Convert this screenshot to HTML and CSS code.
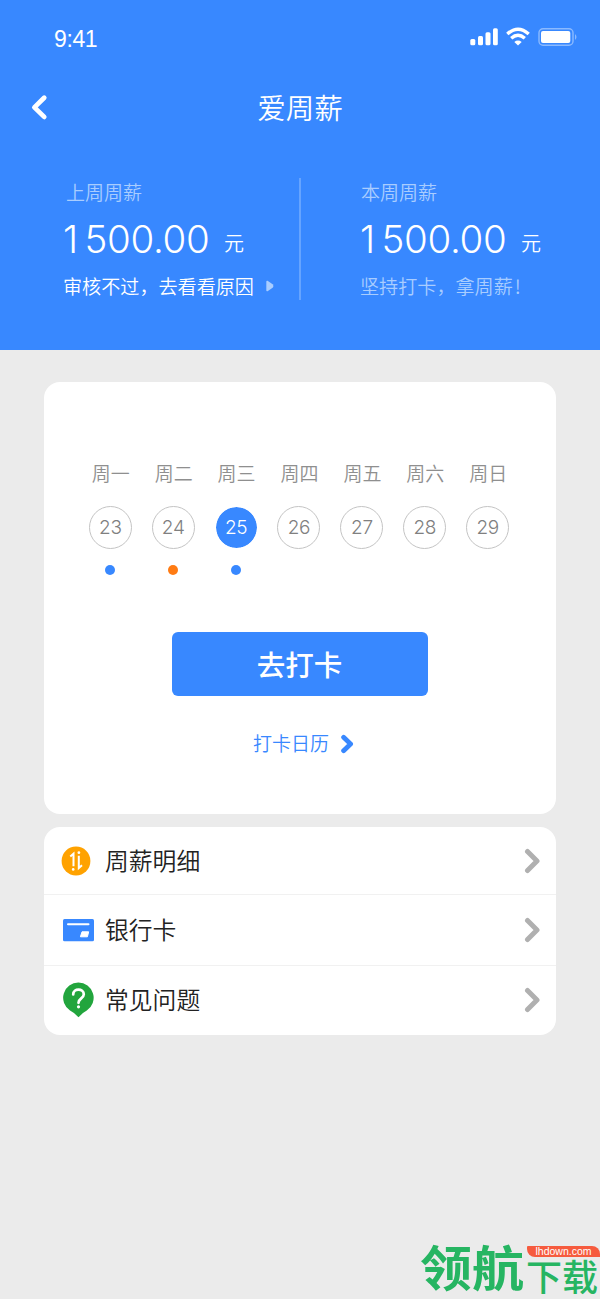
FILE: index.html
```html
<!DOCTYPE html>
<html lang="zh-CN">
<head>
<meta charset="utf-8">
<title>爱周薪</title>
<link rel="stylesheet" href="styles.css">
</head>
<body>
<div class="page">
  <header class="hero">
    <div class="status">
      <span class="clock">9:41</span>
      <svg class="status-icons" width="108" height="20" viewBox="0 0 108 20">
        <g fill="#fff">
          <rect x="0.3" y="12" width="5" height="6.2" rx="1.5"/>
          <rect x="8" y="9" width="5" height="9.2" rx="1.5"/>
          <rect x="15.5" y="5.2" width="5" height="13" rx="1.5"/>
          <rect x="23" y="1.2" width="4.8" height="17" rx="1.5"/>
          <path d="M48 18.5 L44.3 14.9 Q48 12 51.7 14.9 Z"/>
          <rect x="71" y="4" width="29.3" height="12" rx="2"/>
        </g>
        <path d="M37.3 7 Q48 -2.6 58.7 7 M41.2 11.3 Q48 5.3 54.8 11.3" fill="none" stroke="#fff" stroke-width="3.4"/>
        <rect x="69" y="1.7" width="34" height="16.6" rx="4" fill="none" stroke="#fff" stroke-opacity=".42" stroke-width="1.4"/>
        <path d="M105 7v6q3-3 0-6z" fill="#fff" fill-opacity=".42"/>
      </svg>
    </div>
    <div class="nav">
      <svg class="back" width="20" height="28" viewBox="0 0 20 28"><path d="M15.2 4.7 5.4 14.4l9.8 9.5" fill="none" stroke="#fff" stroke-width="4.8" stroke-linecap="round" stroke-linejoin="round"/></svg>
      <h1 class="title">爱周薪</h1>
    </div>
    <div class="stats">
      <section class="stat">
        <p class="label">上周周薪</p>
        <p class="amount"><span class="num"><span class="lead">1</span>500.00</span><span class="unit">元</span></p>
        <p class="hint strong">审核不过，去看看原因<svg class="play" width="8" height="12" viewBox="0 0 8 12"><path d="M.3 1.8Q.3.3 1.6.8L6.6 4.2Q8.2 6 6.6 7.8L1.6 11.2Q.3 11.7.3 10.2z" fill="#a9cdff"/></svg></p>
      </section>
      <section class="stat right">
        <p class="label">本周周薪</p>
        <p class="amount"><span class="num"><span class="lead">1</span>500.00</span><span class="unit">元</span></p>
        <p class="hint">坚持打卡，拿周薪<span class="bang">!</span></p>
      </section>
    </div>
  </header>
  <main class="content">
    <section class="card">
      <div class="week">
        <div class="day"><span class="name">周一</span><span class="date">23</span><i class="dot"></i></div>
        <div class="day"><span class="name">周二</span><span class="date">24</span><i class="dot orange"></i></div>
        <div class="day"><span class="name">周三</span><span class="date active">25</span><i class="dot"></i></div>
        <div class="day"><span class="name">周四</span><span class="date">26</span></div>
        <div class="day"><span class="name">周五</span><span class="date">27</span></div>
        <div class="day"><span class="name">周六</span><span class="date">28</span></div>
        <div class="day"><span class="name">周日</span><span class="date">29</span></div>
      </div>
      <button class="punch">去打卡</button>
      <a class="calendar">打卡日历<svg width="14" height="20" viewBox="0 0 14 20"><path d="M3.6 3.3 10.6 10l-7 6.7" fill="none" stroke="#3888ff" stroke-width="4.8" stroke-linecap="round" stroke-linejoin="round"/></svg></a>
    </section>
    <nav class="menu">
      <a class="item">
        <svg class="icon" width="36" height="36" viewBox="0 0 36 36"><circle cx="16" cy="18" r="14.4" fill="#ffa200"/><g fill="none" stroke="#fff" stroke-width="2"><path d="M10.3 13.6 13.5 10.8V23.3M18.8 12.8V25l3.2-2.8"/></g><g fill="#fff"><circle cx="13.2" cy="26.4" r="1.3"/><circle cx="18.9" cy="9.7" r="1.4"/></g></svg>
        <span class="text">周薪明细</span>
        <svg class="chev" width="18" height="28" viewBox="0 0 18 28"><path d="M3.5 4.5 13 14l-9.5 9.5"/></svg>
      </a>
      <a class="item">
        <svg class="icon" width="36" height="36" viewBox="0 0 36 36"><rect x="3" y="7" width="31" height="22.3" rx="1.5" fill="#3888ff"/><path d="M8 12.2h20.5" stroke="#fff" stroke-width="2" stroke-linecap="round"/><path d="M22 19.8h6.7l-1.3 5h-7z" fill="#fff" stroke="#fff" stroke-linejoin="round"/></svg>
        <span class="text">银行卡</span>
        <svg class="chev" width="18" height="28" viewBox="0 0 18 28"><path d="M3.5 4.5 13 14l-9.5 9.5"/></svg>
      </a>
      <a class="item">
        <svg class="icon" width="36" height="36" viewBox="0 0 36 36"><path d="M18.4.6a15.2 15.2 0 0 1 8.4 27.9Q22 31 18.5 35.2 15 31 10 28.5A15.2 15.2 0 0 1 18.4.6z" fill="#22a53d"/><path d="M13.2 12.4c0-6.5 10.6-6.3 10.6-.2 0 4.3-5.3 4-5.3 8.6" fill="none" stroke="#fff" stroke-width="2.7" stroke-linecap="round"/><circle cx="18.5" cy="24.8" r="1.6" fill="#fff"/></svg>
        <span class="text">常见问题</span>
        <svg class="chev" width="18" height="28" viewBox="0 0 18 28"><path d="M3.5 4.5 13 14l-9.5 9.5"/></svg>
      </a>
    </nav>
  </main>
  <div class="watermark">
    <span class="wm-big">领航</span>
    <div class="wm-side"><span class="wm-url">lhdown.com</span><span class="wm-small">下载</span></div>
  </div>
</div>
</body>
</html>
```
FILE: styles.css
```css
* { box-sizing: border-box; }
body { margin: 0; font-family: "Noto Sans CJK SC", sans-serif; font-weight: 350; }
p, h1 { margin: 0; }
svg { display: block; flex: none; }

.page { position: relative; width: 600px; height: 1299px; background: #ebebeb; overflow: hidden; }

.hero { height: 350px; background: #3888ff; color: #fff; }
.status { height: 76px; padding: 0 22px 0 54px; display: flex; justify-content: space-between; }
.clock { padding-top: 24px; font: 400 23px/30px "Liberation Sans", sans-serif; letter-spacing: -.4px; }
.status-icons { margin-top: 27px; }
.nav { height: 60px; padding: 0 29px; display: grid; grid-template-columns: 20px 1fr 20px; align-items: center; }
.title { font-size: 28.5px; font-weight: 350; line-height: 62px; text-align: center; }

.stats { display: flex; padding-top: 42px; }
.stat { width: 300px; height: 122px; padding-left: 63px; }
.stat + .stat { border-left: 2px solid #66a4ff; margin-left: -1px; padding-left: 60px; width: 301px; }
.label { padding-left: 3px; font-size: 19px; line-height: 28px; color: #a9cdff; }
.right .label { padding-left: 0; }
.amount { display: flex; height: 67px; }
.num { width: 161px; font: 300 38.5px/67px Inter, sans-serif; letter-spacing: -.3px; }
.lead { display: inline-block; width: 21.5px; }
.right .num { margin-left: -1px; }
.unit { font-size: 20px; line-height: 73px; }
.hint { display: flex; align-items: center; font-size: 19.1px; line-height: 26px; color: #a9cdff; white-space: nowrap; }
.right .hint { margin-left: -1px; }
.strong { color: #fff; }
.play { margin-left: 12px; }
.bang { margin-left: 2px; }

.content { padding: 32px 44px 0; display: flex; flex-direction: column; gap: 13px; }
.card { height: 431.5px; padding-top: 76px; border-radius: 16px; background: #fff; display: flex; flex-direction: column; align-items: center; }
.week { display: grid; grid-template-columns: repeat(7, 62.9px); height: 174px; margin-left: -2px; }
.day { display: flex; flex-direction: column; align-items: center; }
.name { padding-left: 1px; font-size: 19px; line-height: 30px; color: #8f8f8f; }
.date { width: 43px; height: 43px; margin: 18px 0 15.5px; border: 1.5px solid #c4c4c4; border-radius: 50%; font: 300 19px/41px Inter, sans-serif; letter-spacing: -.3px; text-align: center; color: #808080; }
.active { border-color: #fff; background: #3888ff; background-clip: padding-box; color: #fff; }
.dot { width: 10px; height: 10px; border-radius: 50%; background: #3888ff; }
.orange { background: #ff7b13; }
.punch { width: 256px; height: 64px; margin-left: -1px; padding: 0; border: 0; border-radius: 6px; background: #3888ff; color: #fff; font: 500 28.5px/64px "Noto Sans CJK SC", sans-serif; }
.calendar { display: flex; align-items: center; gap: 11px; margin: 32px 0 0 7px; font-size: 19px; line-height: 30px; color: #3888ff; }
.calendar svg { margin-top: 1px; }

.menu { height: 208.5px; border-radius: 16px; background: #fff; display: grid; grid-template-rows: 67.5px 70.5px 70.5px; }
.item { display: flex; align-items: center; padding: 0 14px 0 16px; }
.item:first-child { padding-top: 2px; }
.item + .item { border-top: 1px solid #f1f1f1; }
.text { flex: 1; padding: 0 0 2px 9px; font-size: 23.8px; line-height: 38px; color: #222; }
.item:last-child { padding-bottom: 1px; }
.chev path { fill: none; stroke: #b0b0b0; stroke-width: 5; stroke-linecap: round; stroke-linejoin: round; }

.watermark { position: absolute; left: 420px; top: 1243px; display: flex; color: #26b562; font-weight: 700; }
.wm-big { width: 106px; height: 50px; font-size: 52px; line-height: 50px; white-space: nowrap; transform: scaleY(.92); transform-origin: 0 0; }
.wm-side { width: 74px; }
.wm-url { display: block; height: 11px; margin: 3px 0 0 1px; border-radius: 1px 8px 0 8px; background: #f65b3e; color: #fff; font: 400 10.5px/11px "Liberation Sans", sans-serif; text-align: center; }
.wm-small { display: block; font-size: 36px; font-weight: 500; line-height: 37px; white-space: nowrap; }
```
